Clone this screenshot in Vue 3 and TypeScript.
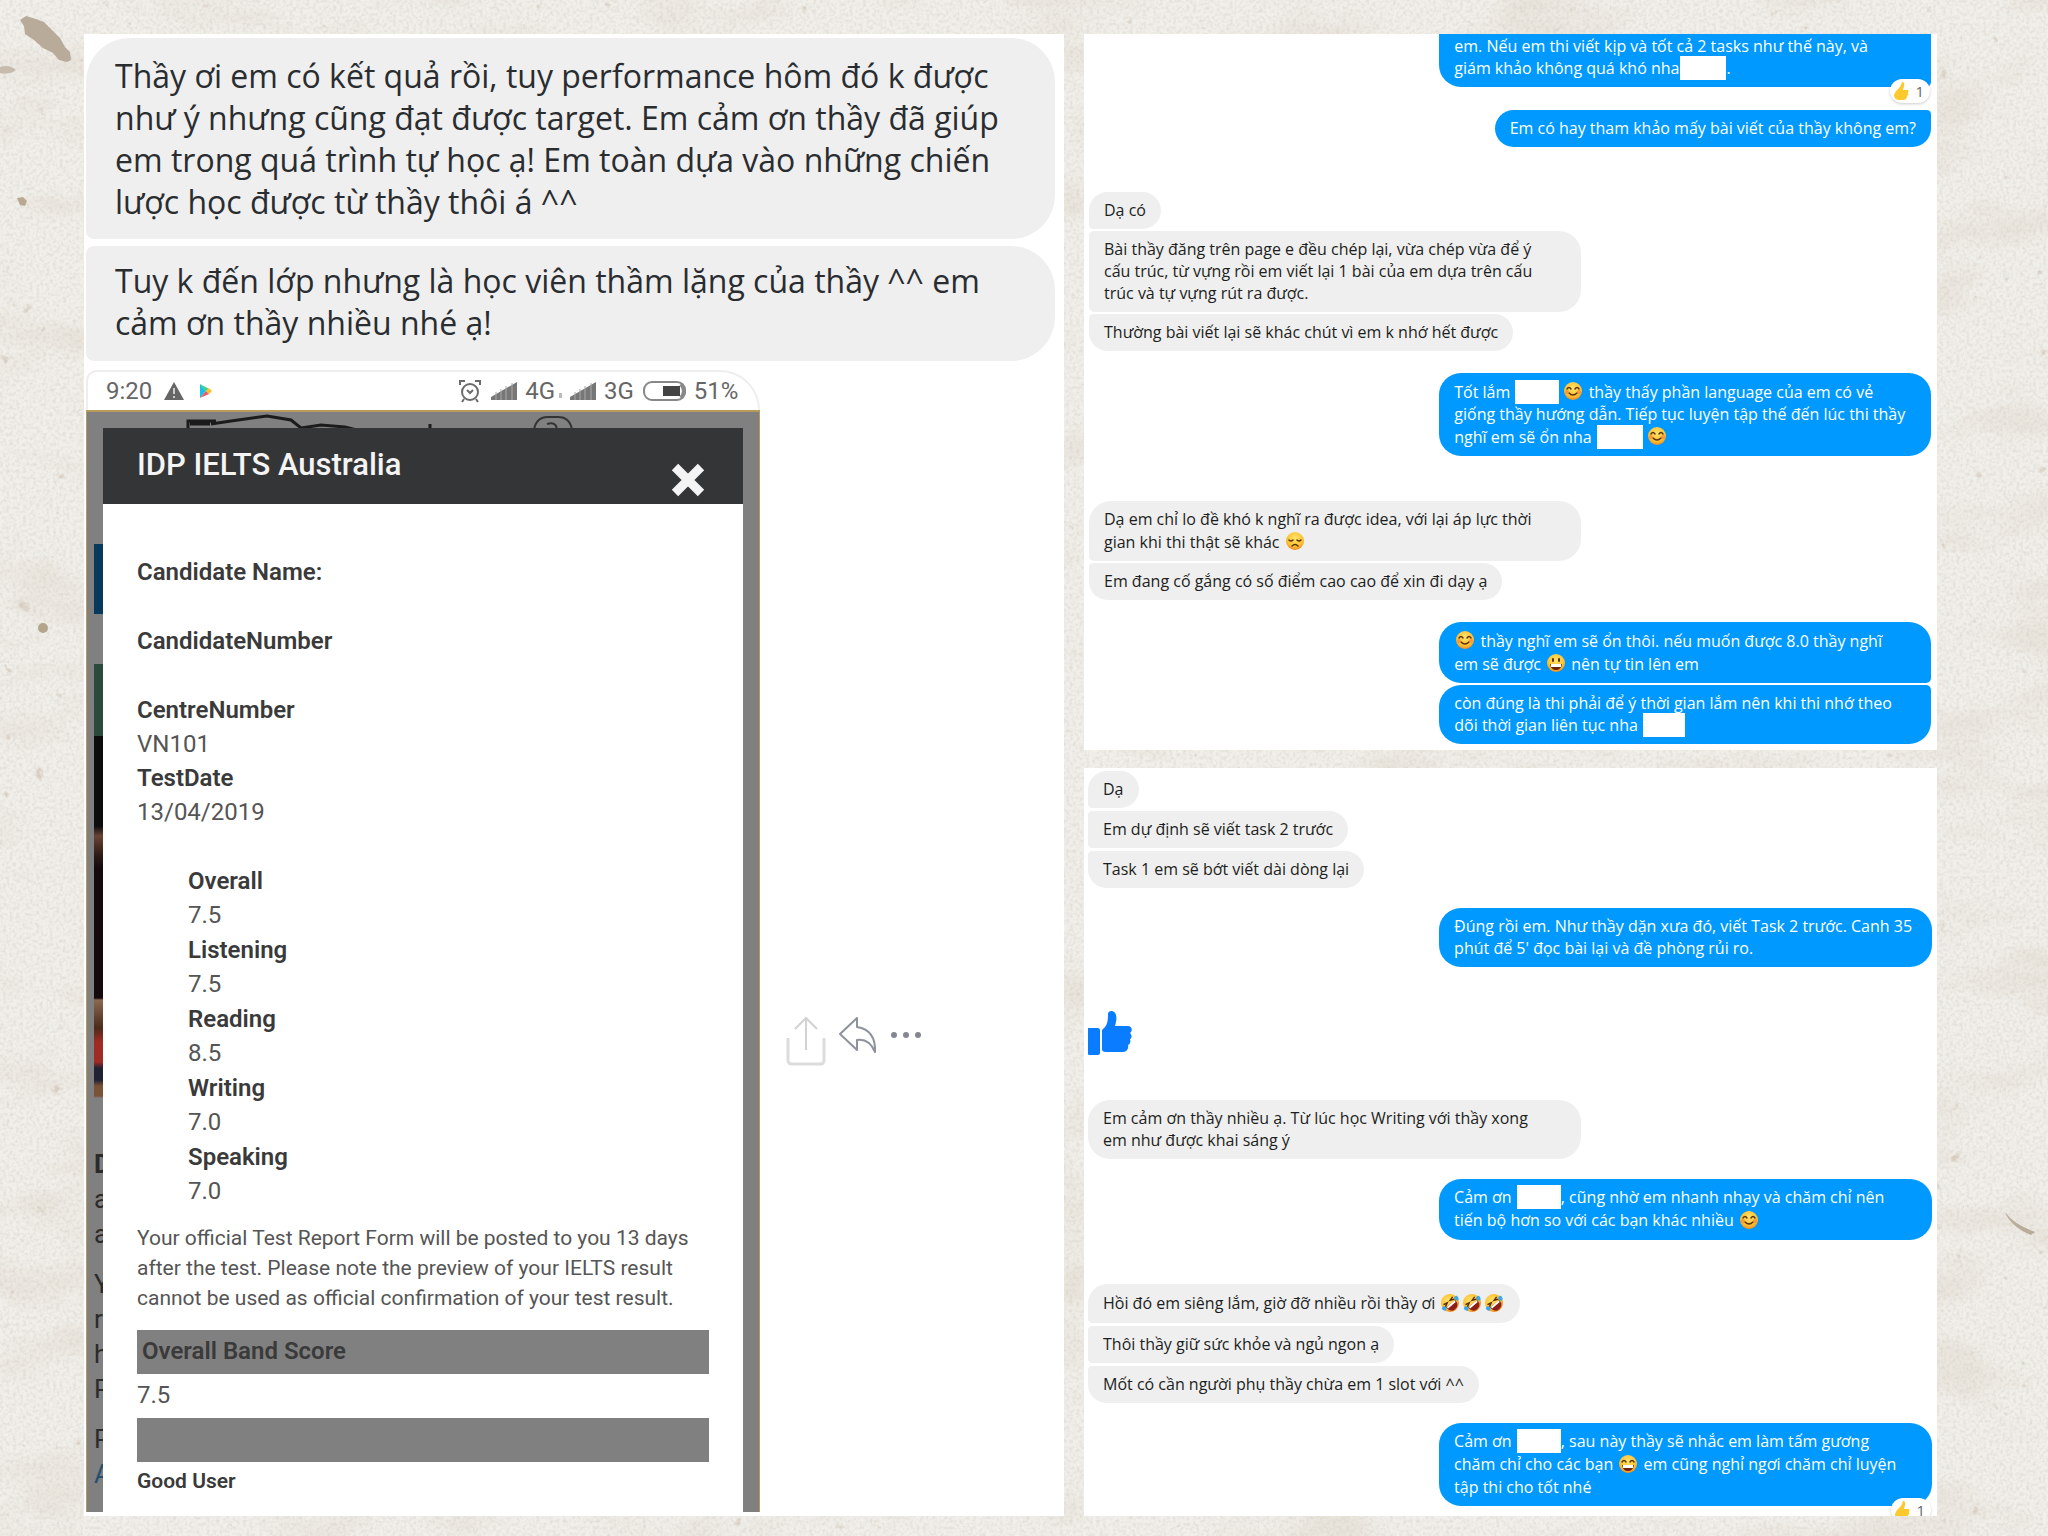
<script setup lang="ts">
type Face = 'smile' | 'grin' | 'sad' | 'rofl' | 'laugh'
type Token = string | { face: Face } | { hide: number; flush?: boolean }
interface Bubble {
  lines?: Token[][]
  wide?: boolean
  shape?: string
  like?: boolean
  reaction?: 'over' | 'cut'
}
interface Group {
  from: 'student' | 'teacher'
  bubbles: Bubble[]
}

const smile: Token = { face: 'smile' }
const rofl: Token = { face: 'rofl' }

const firstChat: Group[] = [
  {
    from: 'teacher',
    bubbles: [
      {
        wide: true,
        shape: 'cropped',
        reaction: 'over',
        lines: [
          ['em. Nếu em thi viết kịp và tốt cả 2 tasks như thế này, và'],
          ['giám khảo không quá khó nha', { hide: 46, flush: true }, '.'],
        ],
      },
      { shape: 'last spaced', lines: [['Em có hay tham khảo mấy bài viết của thầy không em?']] },
    ],
  },
  {
    from: 'student',
    bubbles: [
      { shape: 'first', lines: [['Dạ có']] },
      {
        wide: true,
        shape: 'middle',
        lines: [
          ['Bài thầy đăng trên page e đều chép lại, vừa chép vừa để ý'],
          ['cấu trúc, từ vựng rồi em viết lại 1 bài của em dựa trên cấu'],
          ['trúc và tự vựng rút ra được.'],
        ],
      },
      { shape: 'last', lines: [['Thường bài viết lại sẽ khác chút vì em k nhớ hết được']] },
    ],
  },
  {
    from: 'teacher',
    bubbles: [
      {
        wide: true,
        lines: [
          ['Tốt lắm ', { hide: 44 }, smile, ' thầy thấy phần language của em có vẻ'],
          ['giống thầy hướng dẫn. Tiếp tục luyện tập thế đến lúc thi thầy'],
          ['nghĩ em sẽ ổn nha ', { hide: 46 }, smile],
        ],
      },
    ],
  },
  {
    from: 'student',
    bubbles: [
      {
        wide: true,
        shape: 'first',
        lines: [
          ['Dạ em chỉ lo đề khó k nghĩ ra được idea, với lại áp lực thời'],
          ['gian khi thi thật sẽ khác ', { face: 'sad' }],
        ],
      },
      { shape: 'last', lines: [['Em đang cố gắng có số điểm cao cao để xin đi dạy ạ']] },
    ],
  },
  {
    from: 'teacher',
    bubbles: [
      {
        wide: true,
        shape: 'first',
        lines: [
          [smile, ' thầy nghĩ em sẽ ổn thôi. nếu muốn được 8.0 thầy nghĩ'],
          ['em sẽ được ', { face: 'grin' }, ' nên tự tin lên em'],
        ],
      },
      {
        wide: true,
        shape: 'last',
        lines: [
          ['còn đúng là thi phải để ý thời gian lắm nên khi thi nhớ theo'],
          ['dõi thời gian liên tục nha ', { hide: 42 }],
        ],
      },
    ],
  },
]

const secondChat: Group[] = [
  {
    from: 'student',
    bubbles: [
      { shape: 'first', lines: [['Dạ']] },
      { shape: 'middle', lines: [['Em dự định sẽ viết task 2 trước']] },
      { shape: 'last', lines: [['Task 1 em sẽ bớt viết dài dòng lại']] },
    ],
  },
  {
    from: 'teacher',
    bubbles: [
      {
        wide: true,
        lines: [
          ['Đúng rồi em. Như thầy dặn xưa đó, viết Task 2 trước. Canh 35'],
          ["phút để 5' đọc bài lại và đề phòng rủi ro."],
        ],
      },
    ],
  },
  {
    from: 'student',
    bubbles: [
      { like: true },
      {
        wide: true,
        lines: [['Em cảm ơn thầy nhiều ạ. Từ lúc học Writing với thầy xong'], ['em như được khai sáng ý']],
      },
    ],
  },
  {
    from: 'teacher',
    bubbles: [
      {
        wide: true,
        lines: [
          ['Cảm ơn ', { hide: 44, flush: true }, ', cũng nhờ em nhanh nhạy và chăm chỉ nên'],
          ['tiến bộ hơn so với các bạn khác nhiều ', smile],
        ],
      },
    ],
  },
  {
    from: 'student',
    bubbles: [
      { shape: 'first', lines: [['Hồi đó em siêng lắm, giờ đỡ nhiều rồi thầy ơi ', rofl, rofl, rofl]] },
      { shape: 'middle', lines: [['Thôi thầy giữ sức khỏe và ngủ ngon ạ']] },
      { shape: 'last', lines: [['Mốt có cần người phụ thầy chừa em 1 slot với ^^']] },
    ],
  },
  {
    from: 'teacher',
    bubbles: [
      {
        wide: true,
        reaction: 'cut',
        lines: [
          ['Cảm ơn ', { hide: 44, flush: true }, ', sau này thầy sẽ nhắc em làm tấm gương'],
          ['chăm chỉ cho các bạn ', { face: 'laugh' }, ' em cũng nghỉ ngơi chăm chỉ luyện'],
          ['tập thi cho tốt nhé'],
        ],
      },
    ],
  },
]

const chats = [firstChat, secondChat]

const scores = [
  ['Overall', '7.5'],
  ['Listening', '7.5'],
  ['Reading', '8.5'],
  ['Writing', '7.0'],
  ['Speaking', '7.0'],
]
const coveredText = [
  ['D', 'a', 'a'],
  ['Y', 'r', 'h', 'P'],
  ['P', 'A'],
]

const isFace = (t: Token): t is { face: Face } => typeof t === 'object' && 'face' in t
const isHidden = (t: Token): t is { hide: number; flush?: boolean } => typeof t === 'object' && 'hide' in t
</script>

<template>
  <div class="page">
    <svg class="plaster" aria-hidden="true">
      <defs>
        <filter id="grain" x="0" y="0" width="100%" height="100%">
          <feTurbulence type="fractalNoise" baseFrequency="0.3" numOctaves="3" seed="4" />
          <feColorMatrix values="0 0 0 0 0.6  0 0 0 0 0.56  0 0 0 0 0.5  0.9 0 0 0 -0.36" />
        </filter>
        <filter id="stain" x="0" y="0" width="100%" height="100%">
          <feTurbulence type="fractalNoise" baseFrequency="0.008 0.02" numOctaves="5" seed="9" />
          <feColorMatrix values="0 0 0 0 0.76  0 0 0 0 0.71  0 0 0 0 0.63  1.6 0 0 0 -0.78" />
        </filter>
        <filter id="pits" x="0" y="0" width="100%" height="100%">
          <feTurbulence type="fractalNoise" baseFrequency="0.06" numOctaves="4" seed="21" />
          <feColorMatrix values="0 0 0 0 0.68  0 0 0 0 0.61  0 0 0 0 0.53  8 0 0 0 -6.1" />
        </filter>
        <radialGradient id="skin" cx="50%" cy="35%" r="65%">
          <stop offset="0" stop-color="#ffe36b" />
          <stop offset="0.7" stop-color="#fdc02f" />
          <stop offset="1" stop-color="#f08a24" />
        </radialGradient>
        <symbol id="hand" viewBox="0 0 44 44">
          <path d="M1 17h9c1 0 2 1 2 2v23c0 1-1 2-2 2H1c-1 0-1-1-1-2V18c0-1 0-1 1-1zM14 19c5-4 6-8 6-16 0-4 7-4 8 1 1 4 0 7-1 11h13c4 0 5 5 2 7 2 2 2 5 0 6 1 3 0 5-2 6 1 3-1 7-5 7H18c-3 0-4-1-4-3z" />
        </symbol>
      </defs>
      <rect width="100%" height="100%" filter="url(#stain)" />
      <rect width="100%" height="100%" filter="url(#grain)" />
      <rect width="100%" height="100%" filter="url(#pits)" />
      <path d="M20 20l6-4 10 3 8 3 8 8 8 8 5 9 5 5 1 8-4 2-8-2-6-7-10-5-9-8-9-6-1-8z" fill="#b9ab9a" />
      <path d="M0 67q9-3 16 3-6 5-16 3z" fill="#c6bbac" />
      <path d="M17 198l6-1 4 4-2 5-5-1z" fill="#b9a993" />
      <circle cx="43" cy="628" r="5" fill="#b3a48c" />
      <path d="M2005 1212q8 12 30 20l-4 3q-20-8-26-23z" fill="#b9ad9a" />
    </svg>

    <main class="board">
      <section class="panel feedback">
        <p class="note note-first">
          Thầy ơi em có kết quả rồi, tuy performance hôm đó k được<br />
          như ý nhưng cũng đạt được target. Em cảm ơn thầy đã giúp<br />
          em trong quá trình tự học ạ! Em toàn dựa vào những chiến<br />
          lược học được từ thầy thôi á ^^
        </p>
        <p class="note">
          Tuy k đến lớp nhưng là học viên thầm lặng của thầy ^^ em<br />
          cảm ơn thầy nhiều nhé ạ!
        </p>

        <div class="attachment">
          <article class="phone">
            <header class="status">
              <span>9:20</span>
              <svg class="warn" viewBox="0 0 20 18"><path d="M10 0l10 18H0z" fill="#666" /><path d="M9 6h2v6H9zM9 14h2v2H9z" fill="#ccc" /></svg>
              <svg class="play" viewBox="0 0 12 14"><path d="M0 0v14l6-7z" fill="#18bfe8" /><path d="M0 0l6 7 3-2z" fill="#3ccf7c" /><path d="M6 7l3-3 3 3-3 3z" fill="#fbc22d" /><path d="M0 14l6-7 3 3z" fill="#ee5a63" /></svg>
              <span class="spacer"></span>
              <svg class="alarm" viewBox="0 0 22 24" fill="none" stroke="#6b6b6b" stroke-width="2"><circle cx="11" cy="13" r="8" /><path d="M1 6V2h5M21 6V2h-5M5 20l-2 3M17 20l2 3M8 11l3 3 3-3" /></svg>
              <template v-for="net in ['4G', '3G']" :key="net">
                <svg class="signal" viewBox="0 0 26 18" fill="#777"><path d="M0 18v-3L26 0v18z" /><path d="M5 10v8M10 7v11M15 4v14M21 1v17" stroke="#aaa" /></svg>
                <span>{{ net }}</span>
                <i v-if="net === '4G'" class="tick"></i>
              </template>
              <svg class="battery" viewBox="0 0 44 20"><rect x="1" y="1" width="41" height="18" rx="8" fill="#fff" stroke="#888" stroke-width="2" /><path d="M20 5h17v10H20z" fill="#444" /><path d="M38 3q6 7 0 14" fill="none" stroke="#888" stroke-width="4" /></svg>
              <span>51%</span>
            </header>

            <div class="screen">
              <svg class="scribble" viewBox="0 0 440 16" fill="none" stroke="#1b1b1b" stroke-width="3">
                <path d="M3 16V7h28M5 10h20M26 10l20-3 36-5 24 4 10 8 20-3 24 2 20 5M245 10v6" />
                <path d="M349 16q2-13 14-13h10q12 0 14 13M362 10q10-3 10 7" stroke="#333" stroke-width="2" />
              </svg>
              <div class="behind" aria-hidden="true">
                <div class="photos"></div>
                <p v-for="(letters, i) in coveredText" :key="i">
                  <span v-for="(letter, k) in letters" :key="k">{{ letter }}</span>
                </p>
              </div>
              <div class="modal">
                <header class="modal-head">
                  <h1>IDP IELTS Australia</h1>
                  <button type="button" aria-label="Close">
                    <svg viewBox="0 0 36 36"><path d="M5 5l26 26M31 5L5 31" stroke="#f4f4f4" stroke-width="9" /></svg>
                  </button>
                </header>
                <div class="modal-body">
                  <dl class="who">
                    <dt class="blank">Candidate Name:</dt>
                    <dt class="blank">CandidateNumber</dt>
                    <dt>CentreNumber</dt>
                    <dd>VN101</dd>
                    <dt>TestDate</dt>
                    <dd>13/04/2019</dd>
                  </dl>
                  <dl class="scores">
                    <template v-for="[name, value] in scores" :key="name">
                      <dt>{{ name }}</dt>
                      <dd>{{ value }}</dd>
                    </template>
                  </dl>
                  <p class="official">
                    Your official Test Report Form will be posted to you 13 days<br />
                    after the test. Please note the preview of your IELTS result<br />
                    cannot be used as official confirmation of your test result.
                  </p>
                  <h2 class="bar">Overall Band Score</h2>
                  <p class="band">7.5</p>
                  <div class="bar"></div>
                  <p class="good">Good User</p>
                </div>
              </div>
            </div>
          </article>

          <div class="actions">
            <button type="button" aria-label="Share">
              <svg width="40" height="50" viewBox="0 0 40 50" fill="none" stroke="#dcdcdc" stroke-width="3"><path d="M2 22v22q0 4 4 4h28q4 0 4-4V22" /><path d="M20 34V2M9 13L20 2l11 11" stroke="#d2d2d2" stroke-width="2" /></svg>
            </button>
            <button type="button" aria-label="Reply">
              <svg width="40" height="38" viewBox="0 0 40 38" fill="none" stroke="#8d929b" stroke-width="2" stroke-linejoin="round"><path d="M19 2L2 18l17 16V24q12-2 18 12 1-22-18-25z" /></svg>
            </button>
            <button type="button" aria-label="More">
              <svg width="32" height="8" viewBox="0 0 32 8" fill="#83878f"><circle cx="4" cy="4" r="3" /><circle cx="16" cy="4" r="3" /><circle cx="28" cy="4" r="3" /></svg>
            </button>
          </div>
        </div>
      </section>

      <div class="chats">
        <section v-for="(chat, c) in chats" :key="c" class="panel chat" :class="{ second: c === 1 }">
          <div v-for="(group, g) in chat" :key="g" class="group" :class="group.from">
            <template v-for="(b, i) in group.bubbles" :key="i">
              <svg v-if="b.like" class="like"><use href="#hand" fill="#0a7cff" /></svg>
              <div v-else class="bubble" :class="[b.shape, { wide: b.wide }]">
                <p v-for="(line, l) in b.lines" :key="l" class="line">
                  <template v-for="(t, k) in line" :key="k">
                    <svg v-if="isFace(t)" class="face" viewBox="0 0 20 20">
                      <g v-if="t.face === 'rofl'" transform="rotate(-40 10 10)">
                        <circle cx="10" cy="10" r="9" fill="url(#skin)" />
                        <path d="M4 7l4 1-4 2M16 7l-4 1 4 2" fill="none" stroke="#5a2f0c" stroke-width="1.5" />
                        <path d="M4 11h12q0 7-6 7t-6-7z" fill="#8c1f16" />
                        <path d="M5 11h10v2H5z" fill="#fff" />
                        <path d="M0 9q3-2 4 1 0 3-2 3T0 9zM20 9q-3-2-4 1 0 3 2 3t2-4z" fill="#35a8ef" />
                      </g>
                      <g v-else fill="none" stroke="#5a3410" stroke-width="1.5" stroke-linecap="round">
                        <circle cx="10" cy="10" r="9" fill="url(#skin)" stroke="none" />
                        <template v-if="t.face === 'smile'">
                          <path d="M4 8q2-3 4 0M12 8q2-3 4 0M6 12q4 4 8 0" />
                          <circle cx="4" cy="11" r="2" fill="#f77b3b" stroke="none" opacity="0.6" />
                          <circle cx="16" cy="11" r="2" fill="#f77b3b" stroke="none" opacity="0.6" />
                        </template>
                        <template v-else-if="t.face === 'sad'">
                          <path d="M4 9q2 2 4 0M12 9q2 2 4 0M7 15q3-3 6 0" />
                        </template>
                        <template v-else>
                          <path v-if="t.face === 'grin'" d="M7 6v2M13 6v2" stroke-width="2" />
                          <path v-else d="M4 8q2-3 4 0M12 8q2-3 4 0" />
                          <path d="M4 11h12q-1 6-6 6t-6-6z" fill="#6b2413" stroke="none" />
                          <path d="M5 11h10v3H5z" fill="#fff" stroke="none" />
                        </template>
                      </g>
                    </svg>
                    <span v-else-if="isHidden(t)" class="hidden-name" :class="{ flush: t.flush }" :style="{ width: t.hide + 'px' }"></span>
                    <span v-else>{{ t }}</span>
                  </template>
                </p>
                <span v-if="b.reaction" class="reaction" :class="b.reaction">
                  <svg width="15" height="18" viewBox="0 0 15 18"><path d="M8 0q3 0 2 4l-1 4h5q1 1 0 3 1 2-1 3 0 4-4 4H4q-4-1-4-5 1-4 5-7 2-2 3-6z" fill="#fdc92d" /></svg>
                  <span>1</span>
                </span>
              </div>
            </template>
          </div>
        </section>
      </div>
    </main>
  </div>
</template>

<style>
body {
  margin: 0;
  background: #f1efea;
}
</style>

<style scoped>
.page {
  position: relative;
  min-height: 100vh;
  overflow: hidden;
  box-sizing: border-box;
  padding: 34px 111px 20px 84px;
  background: #f1efea;
  font-family: 'Open Sans', 'Noto Sans', sans-serif;
}
.plaster {
  position: absolute;
  inset: 0;
  width: 100%;
  height: 100%;
}
.board {
  position: relative;
  display: grid;
  grid-template-columns: minmax(0, 980fr) minmax(0, 853fr);
  gap: 20px;
  align-items: start;
}
p,
h1,
h2,
dl,
dd {
  margin: 0;
}
button {
  padding: 0;
  border: 0;
  background: none;
}
button svg {
  display: block;
}
.panel {
  background: #fff;
}

/* Left column */
.feedback {
  padding: 4px 9px 4px 2px;
}
.note {
  margin-bottom: 7px;
  padding: 14px 29px 17px;
  border-radius: 8px 44px 44px 8px;
  background: #efefef;
  color: #2a2d30;
  font-size: 32px;
  line-height: 42px;
  white-space: nowrap;
}
.note-first {
  padding-top: 17px;
  padding-bottom: 16px;
  border-top-left-radius: 44px;
}
.note:nth-of-type(2) {
  margin-bottom: 9px;
}
.attachment {
  display: flex;
  align-items: center;
}
.phone {
  flex: 0 0 69.6%;
  font-family: Roboto, sans-serif;
}
.status {
  display: flex;
  align-items: center;
  box-sizing: border-box;
  height: 40px;
  padding: 0 20px 0 18px;
  border: 2px solid #eee;
  border-bottom: 0;
  border-radius: 12px 44px 0 0;
  color: #666;
  font-size: 24px;
  line-height: 38px;
}
.spacer {
  flex: 1;
}
.warn {
  width: 20px;
  height: 18px;
  margin: 0 16px 0 12px;
}
.play {
  width: 12px;
  height: 14px;
}
.alarm {
  width: 22px;
  height: 24px;
  margin-right: 10px;
}
.signal {
  width: 26px;
  height: 18px;
  margin-right: 8px;
}
.tick {
  width: 3px;
  height: 5px;
  margin: 8px 8px 0 4px;
  background: #bbb;
}
.battery {
  width: 44px;
  height: 20px;
  margin: 0 7px 0 9px;
}
.screen {
  position: relative;
  padding: 16px 16px 0;
  border: 1px solid #b79a5c;
  border-top-width: 2px;
  border-bottom: 0;
  background: #808080;
}
.scribble {
  position: absolute;
  top: 2px;
  left: 98px;
  width: 440px;
  height: 16px;
}
.behind {
  position: absolute;
  top: 16px;
  bottom: 0;
  left: 7px;
  width: 10px;
  overflow: hidden;
  color: #2b2b2b;
  font-size: 26px;
  line-height: 35px;
}
.behind p {
  margin-bottom: 15px;
}
.behind span {
  display: block;
}
.behind p:nth-of-type(1) span:first-child {
  font-weight: 700;
}
.behind p:last-child span:last-child {
  color: #24506f;
}
.photos {
  height: 719px;
  background: linear-gradient(
    #808080 116px,
    #06395c 116px 186px,
    #808080 186px 236px,
    #2b4a3d 236px 308px,
    #0c0c0c 308px 398px,
    #6a4336 408px,
    #2a1a14 428px,
    #140a0e 440px 570px,
    #8a6a50 572px,
    #4a2a1a 600px,
    #a02a24 614px 634px,
    #1f2233 640px 652px,
    #7a5238 658px 668px,
    #808080 670px
  );
}
.modal {
  position: relative;
  background: #fff;
}
.modal-head {
  display: flex;
  justify-content: space-between;
  height: 76px;
  padding: 0 37px 0 34px;
  background: #343537;
}
.modal-head h1 {
  color: #f4f4f4;
  font-size: 31px;
  font-weight: 500;
  line-height: 74px;
}
.modal-head button {
  align-self: flex-end;
  width: 36px;
  height: 36px;
  margin-bottom: 6px;
}
.modal-body {
  padding: 51px 34px 12px;
  color: #555;
  font-size: 24px;
  line-height: 34px;
}
dt {
  color: #3a3a3a;
  font-weight: 600;
}
.who .blank {
  margin-bottom: 35px;
}
.who {
  margin-bottom: 35px;
}
.scores {
  padding-left: 51px;
}
.scores dd {
  margin-bottom: 1px;
}
.official {
  margin: 15px 0 17px;
  font-size: 21px;
  line-height: 30px;
  white-space: nowrap;
}
.bar {
  box-sizing: border-box;
  height: 44px;
  padding-left: 5px;
  background: #808080;
  color: #3a3a3a;
  font-size: 24px;
  font-weight: 600;
  line-height: 42px;
}
.band {
  padding-bottom: 2px;
  line-height: 42px;
}
.good {
  color: #3a3a3a;
  font-size: 21px;
  font-weight: 600;
  line-height: 38px;
}
.actions {
  display: flex;
  align-items: flex-start;
  gap: 12px;
  margin: 200px 0 0 26px;
}
.actions button {
  display: flex;
  align-items: center;
  min-height: 38px;
}

/* Right column */
.chats {
  display: grid;
  gap: 18px;
  color: #1c1e21;
  font-size: 16px;
}
.chat {
  position: relative;
  display: flex;
  flex-direction: column;
  padding: 0 6px 6px 5px;
  overflow: hidden;
}
.second {
  padding: 3px 5px 10px 4px;
}
.group {
  display: flex;
  flex-direction: column;
  align-items: flex-start;
  gap: 2px;
}
.second .group {
  gap: 3px;
}
.teacher {
  align-items: flex-end;
  margin-top: 22px;
}
.second .teacher {
  margin-top: 20px;
}
.teacher:first-child {
  margin-top: 0;
}
.teacher + .student {
  margin-top: 45px;
}
.second .teacher + .student {
  margin-top: 44px;
}
.bubble {
  position: relative;
  box-sizing: border-box;
  padding: 7px 15px 8px;
  border-radius: 22px;
  background: #efefef;
  white-space: pre;
}
.wide {
  width: 58.4%;
}
.teacher .bubble {
  background: #0099ff;
  color: #fff;
}
.student .first {
  border-bottom-left-radius: 5px;
}
.student .middle {
  border-top-left-radius: 5px;
  border-bottom-left-radius: 5px;
}
.student .last {
  border-top-left-radius: 5px;
}
.teacher .first {
  border-bottom-right-radius: 5px;
}
.teacher .last {
  border-top-right-radius: 5px;
}
.teacher .cropped {
  padding-top: 1px;
  border-radius: 0 0 5px 22px;
}
.teacher .spaced {
  margin-top: 21px;
}
.line {
  display: flex;
  align-items: center;
  line-height: 22px;
}
.face {
  flex: none;
  width: 20px;
  height: 20px;
  margin: 1px 1px 2px;
}
.second .face {
  margin: 2px 1px;
}
.hidden-name {
  flex: none;
  height: 24px;
  margin: -1px 3px -1px 1px;
  background: #fff;
}
.flush {
  margin-right: 0;
}
.reaction {
  position: absolute;
  right: 1px;
  bottom: -16px;
  display: flex;
  align-items: center;
  gap: 6px;
  height: 24px;
  padding: 0 6px 0 4px;
  border-radius: 12px;
  background: #fff;
  box-shadow: 0 1px 3px rgb(0 0 0 / 20%);
  color: #65676b;
  font-size: 15px;
  line-height: 24px;
  white-space: normal;
}
.like {
  width: 44px;
  height: 44px;
  margin-bottom: 42px;
}
</style>
